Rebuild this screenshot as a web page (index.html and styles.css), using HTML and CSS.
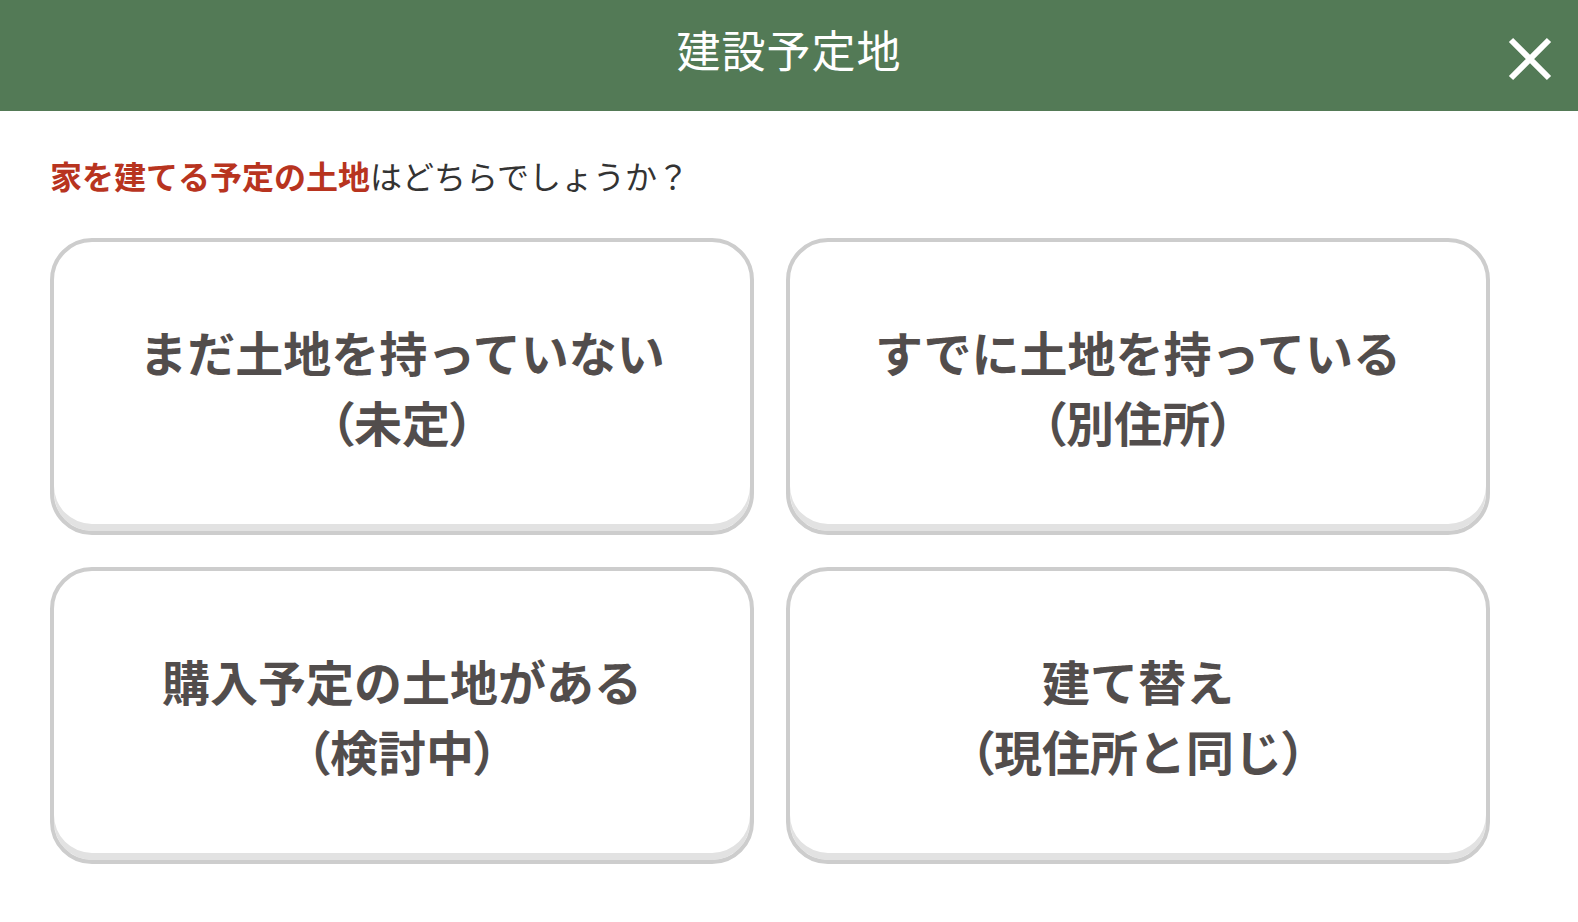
FILE: index.html
```html
<!DOCTYPE html>
<html lang="ja">
<head>
<meta charset="utf-8">
<title>建設予定地</title>
<link rel="stylesheet" href="styles.css">
</head>
<body>
<header class="header">
  <h1 class="title">建設予定地</h1>
  <button class="close" aria-label="閉じる">
    <svg width="44" height="44" viewBox="0 0 44 44"><path d="M3 3 L41 41 M41 3 L3 41" stroke="#fff" stroke-width="6" stroke-linecap="butt"/></svg>
  </button>
</header>
<main class="main">
  <p class="question"><span class="em">家を建てる予定の土地</span>はどちらでしょうか？</p>
  <div class="grid">
    <button class="card">まだ土地を持っていない<br><span class="p">（</span>未定<span class="p">）</span></button>
    <button class="card">すでに土地を持っている<br><span class="p">（</span>別住所<span class="p">）</span></button>
    <button class="card">購入予定の土地がある<br><span class="p">（</span>検討中<span class="p">）</span></button>
    <button class="card">建て替え<br><span class="p">（</span>現住所と同じ<span class="p">）</span></button>
  </div>
</main>
</body>
</html>
```
FILE: styles.css
```css
html, body {
  margin: 0;
  padding: 0;
  background: #fff;
}
body {
  font-family: "Noto Sans CJK JP", "Noto Sans", sans-serif;
}
.header {
  position: relative;
  height: 111px;
  background: #537a56;
  display: flex;
  align-items: center;
  justify-content: center;
}
.title {
  margin: 0 0 14px 0;
  color: #fff;
  font-size: 44px;
  font-weight: 400;
  letter-spacing: 1px;
  line-height: 1;
}
.close {
  position: absolute;
  right: 26px;
  top: 37px;
  width: 44px;
  height: 44px;
  padding: 0;
  border: 0;
  background: none;
}
.close svg { display: block; }
.main {
  width: 1440px;
  margin-left: 50px;
}
.question {
  margin: 46px 0 0 0;
  font-size: 32px;
  line-height: 36px;
  color: #333;
}
.em {
  color: #b8341f;
  font-weight: 700;
}
.grid {
  margin-top: 45px;
  display: grid;
  grid-template-columns: 704px 704px;
  grid-auto-rows: 297px;
  gap: 32px;
}
.card {
  box-sizing: border-box;
  border: 4px solid #cdcdcd;
  border-radius: 42px;
  background: #fff;
  box-shadow: inset 0 -7px 0 #e2e2e2;
  font-family: inherit;
  font-size: 48px;
  font-weight: 700;
  line-height: 70px;
  color: #524d4c;
  text-align: center;
  padding: 0 0 2px 0;
  margin: 0;
}
.p {
  font-feature-settings: "palt";
}
```
